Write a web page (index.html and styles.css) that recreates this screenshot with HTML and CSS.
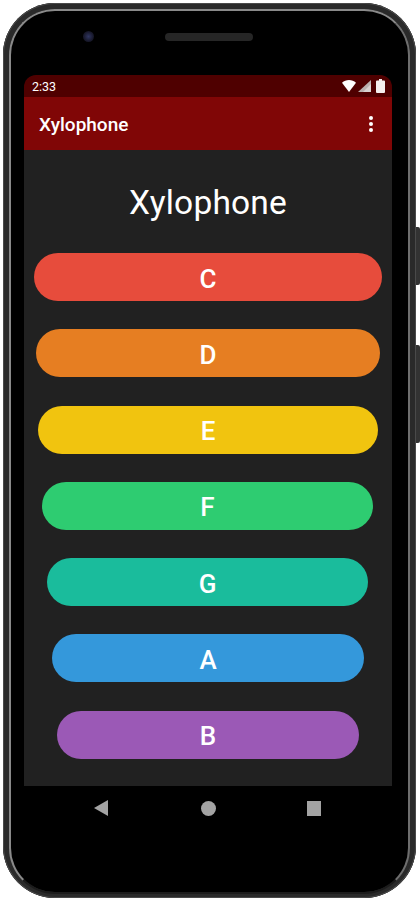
FILE: index.html
```html
<!DOCTYPE html>
<html lang="en">
<head>
    <meta charset="UTF-8">
    <meta name="viewport" content="width=device-width, initial-scale=1.0">
    <title>Xylophone</title>
    <link rel="stylesheet" href="styles.css">
</head>
<body>
    <div class="phone">
        <div class="side-btn side-power"></div>
        <div class="side-btn side-volume"></div>

        <div class="bezel-top">
            <div class="camera"></div>
            <div class="speaker"></div>
        </div>

        <div class="screen">
            <div class="status-bar">
                <span class="clock">2:33</span>
                <div class="status-icons">
                    <svg class="icon-wifi" width="14" height="12" viewBox="0 0 14 12"><path d="M0 2.8C2 1 4.4 0 7 0s5 1 7 2.8L7 12z" fill="#fff"/></svg>
                    <svg class="icon-signal" width="13" height="12" viewBox="0 0 13 12"><path d="M13 0v12H0z" fill="#b9b0ae"/><path d="M13 4v8H5z" fill="#d8d2d0"/></svg>
                    <svg width="9" height="14" viewBox="0 0 9 14"><path d="M3 0h3v1.500h2a1 1 0 0 1 1 1V13a1 1 0 0 1-1 1H1a1 1 0 0 1-1-1V2.500a1 1 0 0 1 1-1h2z" fill="#f4efee"/></svg>
                </div>
            </div>
            <div class="app-bar">
                <span class="app-title">Xylophone</span>
                <div class="overflow-menu">
                    <span class="menu-dot"></span>
                    <span class="menu-dot"></span>
                    <span class="menu-dot"></span>
                </div>
            </div>
            <div class="content">
                <h1 class="heading">Xylophone</h1>
                <div class="keys">
                    <button class="key key-c">C</button>
                    <button class="key key-d">D</button>
                    <button class="key key-e">E</button>
                    <button class="key key-f">F</button>
                    <button class="key key-g">G</button>
                    <button class="key key-a">A</button>
                    <button class="key key-b">B</button>
                </div>
            </div>
        </div>

        <div class="nav-bar">
            <svg width="15" height="16" viewBox="0 0 15 16"><path d="M14 0v16L0 8z" fill="#a3a3a3"/></svg>
            <span class="nav-home"></span>
            <span class="nav-recent"></span>
        </div>
    </div>
</body>
</html>
```

FILE: styles.css
```css
html, body {
    margin: 0;
    padding: 0;
    background: #fff;
}
body {
    width: 420px;
    height: 900px;
    overflow: hidden;
    font-family: Roboto, "Liberation Sans", sans-serif;
}
.phone {
    position: relative;
    box-sizing: border-box;
    width: 413px;
    height: 895px;
    margin: 3px 0 0 3px;
    padding: 0 24px 0 21px;
    background: #000;
    border-radius: 52px;
    box-shadow: inset 0 0 0 1px #4a4a4a, inset 0 0 0 6px #2a2a2a;
}
/* light rim inside the case, fades out at the bottom */
.phone::before {
    content: "";
    position: absolute;
    inset: 6px 6px 4px 6px;
    border: 2px solid;
    border-color: #8a8a8a #6e6e6e #1c1c1c #8a8a8a;
    border-radius: 46px;
    filter: blur(0.6px);
}
.side-btn {
    position: absolute;
    right: -4px;
    width: 4px;
    background: #333;
    border-radius: 0 2px 2px 0;
}
.side-power {
    top: 224px;
    height: 58px;
}
.side-volume {
    top: 342px;
    height: 98px;
}
.bezel-top {
    display: flex;
    align-items: center;
    box-sizing: border-box;
    height: 72px;
    padding-bottom: 5px;
}
.camera {
    width: 11px;
    height: 11px;
    margin-left: 59px;
    border-radius: 50%;
    background: radial-gradient(circle, #2f3560 0, #1a1b30 55%, #0b0b10 100%);
}
.speaker {
    width: 88px;
    height: 8px;
    margin-left: 71px;
    border-radius: 4px;
    background: #262626;
}
.screen {
    position: relative;
    width: 368px;
}
.status-bar {
    display: flex;
    justify-content: space-between;
    align-items: center;
    box-sizing: border-box;
    height: 22px;
    padding: 0 7px 0 8px;
    background: #4f0000;
    border-radius: 12px 12px 0 0;
    color: #fff;
    font-size: 12.5px;
}
.status-icons {
    display: flex;
    align-items: center;
}
.icon-wifi {
    margin-right: 2px;
}
.icon-signal {
    margin-right: 5px;
}
.app-bar {
    display: flex;
    justify-content: space-between;
    align-items: center;
    box-sizing: border-box;
    height: 53px;
    padding: 0 19px 0 15px;
    background: #800606;
    color: #fff;
}
.app-title {
    font-size: 19px;
    font-weight: 500;
    padding-top: 2px;
}
.overflow-menu {
    display: flex;
    flex-direction: column;
    gap: 2px;
}
.menu-dot {
    width: 4px;
    height: 4px;
    border-radius: 50%;
    background: #fff;
}
.content {
    box-sizing: border-box;
    height: 636px;
    padding-top: 33px;
    background: #212121;
}
.heading {
    margin: 0;
    height: 39px;
    line-height: 39px;
    text-align: center;
    color: #fff;
    font-size: 33.5px;
    font-weight: 400;
    letter-spacing: 0.2px;
}
.keys {
    display: flex;
    flex-direction: column;
    align-items: center;
    gap: 28.3px;
    margin-top: 31px;
}
.key {
    height: 48px;
    padding: 3px 0 0;
    border: 0;
    border-radius: 24px;
    color: #fff;
    font-family: Roboto, "Liberation Sans", sans-serif;
    font-size: 26px;
    font-weight: 500;
}
.key-c { width: 348px; background: #e74c3c; }
.key-d { width: 344px; background: #e67e22; }
.key-e { width: 340px; background: #f1c40f; }
.key-f { width: 331px; background: #2ecc71; margin-left: -1px; }
.key-g { width: 321px; background: #1abc9c; margin-left: -1px; }
.key-a { width: 312px; background: #3498db; }
.key-b { width: 302px; background: #9b59b6; }
.nav-bar {
    display: flex;
    justify-content: space-between;
    align-items: center;
    width: 227px;
    height: 44px;
    margin-left: 70px;
}
.nav-home {
    width: 15px;
    height: 15px;
    border-radius: 50%;
    background: #a3a3a3;
}
.nav-recent {
    width: 14px;
    height: 15px;
    background: #a3a3a3;
}
```
